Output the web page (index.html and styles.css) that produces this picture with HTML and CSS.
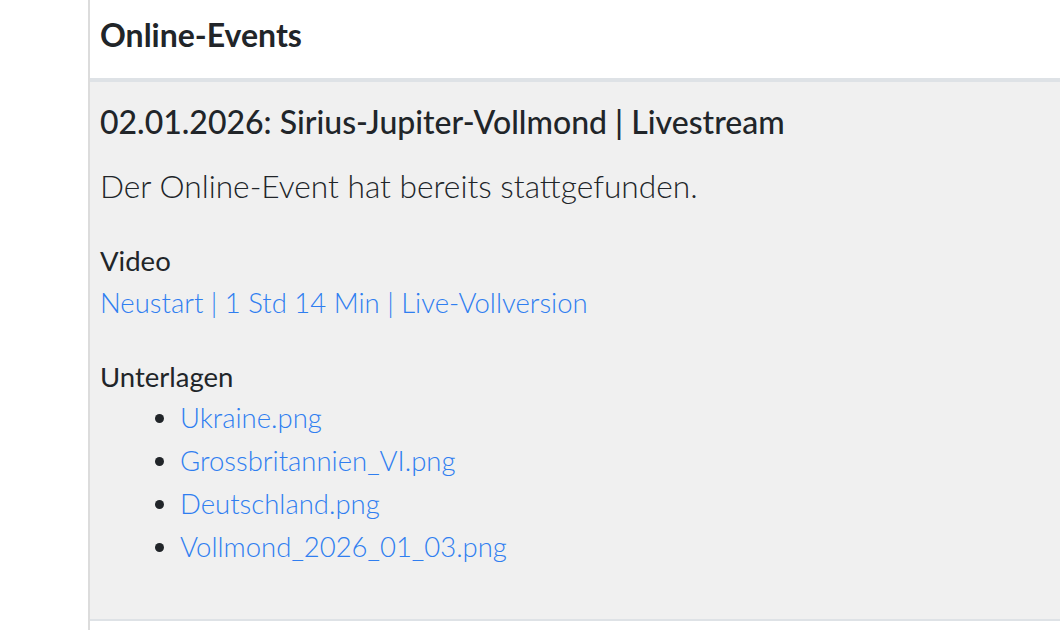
FILE: index.html
```html
<!DOCTYPE html>
<html lang="de">
<head>
<meta charset="utf-8">
<title>Online-Events</title>
<link rel="stylesheet" href="styles.css">
</head>
<body>
<div class="page">
  <div class="column">
    <header class="col-head">
      <h2 class="col-title">Online-Events</h2>
    </header>
    <section class="event">
      <h3 class="event-title">02.01.2026: Sirius-Jupiter-Vollmond | Livestream</h3>
      <p class="event-status">Der Online-Event hat bereits stattgefunden.</p>
      <div class="block">
        <div class="block-label">Video</div>
        <a class="link video-link" href="#">Neustart | 1 Std 14 Min | Live-Vollversion</a>
      </div>
      <div class="block">
        <div class="block-label">Unterlagen</div>
        <ul class="files">
          <li><a class="link" href="#">Ukraine.png</a></li>
          <li><a class="link" href="#">Grossbritannien_VI.png</a></li>
          <li><a class="link" href="#">Deutschland.png</a></li>
          <li><a class="link" href="#">Vollmond_2026_01_03.png</a></li>
        </ul>
      </div>
    </section>
  </div>
</div>
</body>
</html>
```

FILE: styles.css
```css
html, body {
  margin: 0;
  padding: 0;
  background: #ffffff;
}
body {
  font-family: Lato, "Noto Sans", sans-serif;
  color: #212529;
}
.page {
  padding-left: 88px;
  min-height: 630px;
}
.column {
  border-left: 2px solid #dcdcdc;
  min-height: 630px;
}
.col-head {
  display: flex;
  align-items: center;
  padding-left: 10px;
  border-bottom: 4px solid #dee2e6;
  box-sizing: border-box;
  height: 82px;
}
.col-title {
  margin: 0;
  font-size: 32px;
  font-weight: 700;
  padding-bottom: 10px;
}
.event {
  background: #f0f0f0;
  padding: 20px 10px 0 10px;
  height: 539px;
  box-sizing: border-box;
  border-bottom: 2px solid #dee2e6;
}
.event-title {
  margin: 0;
  font-size: 32px;
  font-weight: 500;
  line-height: 40px;
}
.event-status {
  margin: 24px 0 0 0;
  font-size: 31.7px;
  font-weight: 300;
  line-height: 40px;
}
.block {
  margin-top: 36px;
}
.block + .block {
  margin-top: 35px;
}
.block-label {
  font-size: 27.5px;
  font-weight: 400;
  line-height: 38px;
}
.link {
  color: #2f7ef0;
  text-decoration: none;
  font-size: 27.5px;
  font-weight: 300;
  line-height: 40px;
}
.video-link {
  display: inline-block;
  margin-top: 3px;
}
.files {
  margin: 0;
  padding-left: 80px;
}
.files li {
  line-height: 43px;
  font-size: 27.5px;
}
```
